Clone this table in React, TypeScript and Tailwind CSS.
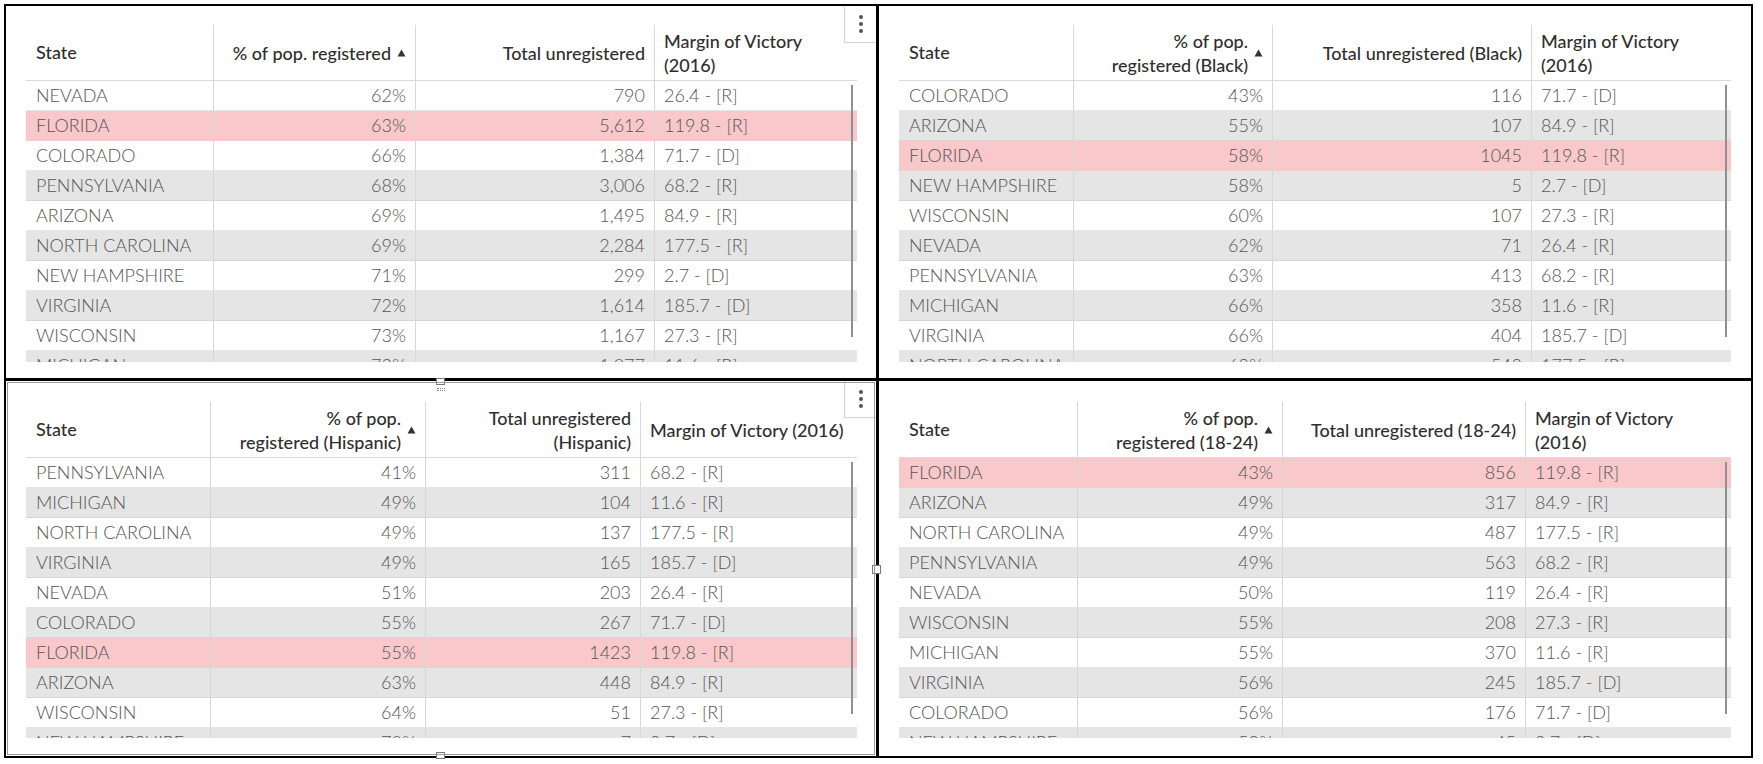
import React from "react";

type Row = [string, string, string, string];

type Panel = {
  cols: string;
  pad: string;
  bodyH: string;
  pctHead: string[];
  totalHead: string[];
  marginHead: string[];
  rows: Row[];
  menu?: boolean;
  selected?: boolean;
};

const panels: Panel[] = [
  {
    cols: "grid-cols-[188px_202px_239px_202px]",
    pad: "pt-[19px] pl-[20px]",
    bodyH: "h-[281px]",
    pctHead: ["% of pop. registered"],
    totalHead: ["Total unregistered"],
    marginHead: ["Margin of Victory", "(2016)"],
    menu: true,
    rows: [
      ["NEVADA", "62%", "790", "26.4 - [R]"],
      ["FLORIDA", "63%", "5,612", "119.8 - [R]"],
      ["COLORADO", "66%", "1,384", "71.7 - [D]"],
      ["PENNSYLVANIA", "68%", "3,006", "68.2 - [R]"],
      ["ARIZONA", "69%", "1,495", "84.9 - [R]"],
      ["NORTH CAROLINA", "69%", "2,284", "177.5 - [R]"],
      ["NEW HAMPSHIRE", "71%", "299", "2.7 - [D]"],
      ["VIRGINIA", "72%", "1,614", "185.7 - [D]"],
      ["WISCONSIN", "73%", "1,167", "27.3 - [R]"],
      ["MICHIGAN", "73%", "1,077", "11.6 - [R]"],
    ],
  },
  {
    cols: "grid-cols-[175px_199px_259px_199px]",
    pad: "pt-[19px] pl-[20px]",
    bodyH: "h-[281px]",
    pctHead: ["% of pop.", "registered (Black)"],
    totalHead: ["Total unregistered (Black)"],
    marginHead: ["Margin of Victory", "(2016)"],
    rows: [
      ["COLORADO", "43%", "116", "71.7 - [D]"],
      ["ARIZONA", "55%", "107", "84.9 - [R]"],
      ["FLORIDA", "58%", "1045", "119.8 - [R]"],
      ["NEW HAMPSHIRE", "58%", "5", "2.7 - [D]"],
      ["WISCONSIN", "60%", "107", "27.3 - [R]"],
      ["NEVADA", "62%", "71", "26.4 - [R]"],
      ["PENNSYLVANIA", "63%", "413", "68.2 - [R]"],
      ["MICHIGAN", "66%", "358", "11.6 - [R]"],
      ["VIRGINIA", "66%", "404", "185.7 - [D]"],
      ["NORTH CAROLINA", "69%", "548", "177.5 - [R]"],
    ],
  },
  {
    cols: "grid-cols-[185px_215px_215px_216px]",
    pad: "pt-[21px] pl-[20px]",
    bodyH: "h-[280px]",
    pctHead: ["% of pop.", "registered (Hispanic)"],
    totalHead: ["Total unregistered", "(Hispanic)"],
    marginHead: ["Margin of Victory (2016)"],
    menu: true,
    selected: true,
    rows: [
      ["PENNSYLVANIA", "41%", "311", "68.2 - [R]"],
      ["MICHIGAN", "49%", "104", "11.6 - [R]"],
      ["NORTH CAROLINA", "49%", "137", "177.5 - [R]"],
      ["VIRGINIA", "49%", "165", "185.7 - [D]"],
      ["NEVADA", "51%", "203", "26.4 - [R]"],
      ["COLORADO", "55%", "267", "71.7 - [D]"],
      ["FLORIDA", "55%", "1423", "119.8 - [R]"],
      ["ARIZONA", "63%", "448", "84.9 - [R]"],
      ["WISCONSIN", "64%", "51", "27.3 - [R]"],
      ["NEW HAMPSHIRE", "70%", "7", "2.7 - [D]"],
    ],
  },
  {
    cols: "grid-cols-[179px_205px_243px_205px]",
    pad: "pt-[21px] pl-[20px]",
    bodyH: "h-[280px]",
    pctHead: ["% of pop.", "registered (18-24)"],
    totalHead: ["Total unregistered (18-24)"],
    marginHead: ["Margin of Victory", "(2016)"],
    rows: [
      ["FLORIDA", "43%", "856", "119.8 - [R]"],
      ["ARIZONA", "49%", "317", "84.9 - [R]"],
      ["NORTH CAROLINA", "49%", "487", "177.5 - [R]"],
      ["PENNSYLVANIA", "49%", "563", "68.2 - [R]"],
      ["NEVADA", "50%", "119", "26.4 - [R]"],
      ["WISCONSIN", "55%", "208", "27.3 - [R]"],
      ["MICHIGAN", "55%", "370", "11.6 - [R]"],
      ["VIRGINIA", "56%", "245", "185.7 - [D]"],
      ["COLORADO", "56%", "176", "71.7 - [D]"],
      ["NEW HAMPSHIRE", "58%", "45", "2.7 - [D]"],
    ],
  },
];

const SortArrow = () => (
  <svg width="9" height="8" viewBox="0 0 9 8" className="ml-[6px] shrink-0">
    <path d="M4.5 0.5 L8.5 7.5 L0.5 7.5 Z" fill="#333" />
  </svg>
);

const HeadText = ({ lines, right }: { lines: string[]; right?: boolean }) => (
  <div className={right ? "text-right leading-[24px]" : "text-left leading-[24px]"}>
    {lines.map((l) => (
      <div key={l} className="whitespace-nowrap">
        {l}
      </div>
    ))}
  </div>
);

const MenuButton = () => (
  <div className="absolute top-0 right-0 w-[32px] h-[37px] bg-white border-l border-b border-[#d2d2d2] flex flex-col items-center justify-center gap-[3px]">
    <span className="w-[4px] h-[4px] rounded-full bg-[#555]" />
    <span className="w-[4px] h-[4px] rounded-full bg-[#555]" />
    <span className="w-[4px] h-[4px] rounded-full bg-[#555]" />
  </div>
);

const Handle = ({ className }: { className: string }) => (
  <div className={`absolute w-[9px] h-[7px] bg-white border border-[#7a7a7a] ${className}`} />
);

const TablePanel = ({ p }: { p: Panel }) => (
  <div className={`relative bg-white overflow-hidden ${p.pad}`}>
    {p.selected && (
      <div className="absolute inset-[1px] border border-[#9a9a9a] pointer-events-none z-10" />
    )}
    <div className="w-fit font-['Lato',sans-serif]">
      {/* header */}
      <div className={`grid ${p.cols} h-[56px] border-b border-[#d9d9d9] text-[18px] font-medium text-[#2f2f2f]`}>
        <div className="flex items-center pl-[10px] border-r border-[#d9d9d9]">State</div>
        <div className="flex items-center justify-end pr-[9px] border-r border-[#d9d9d9]">
          <HeadText lines={p.pctHead} right />
          <SortArrow />
        </div>
        <div className="flex items-center justify-end pr-[9px] border-r border-[#d9d9d9]">
          <HeadText lines={p.totalHead} right />
        </div>
        <div className="flex items-center pl-[9px]">
          <HeadText lines={p.marginHead} />
        </div>
      </div>
      {/* body */}
      <div className={`relative overflow-hidden ${p.bodyH}`}>
        {p.rows.map((r, i) => {
          const pink = r[0] === "FLORIDA";
          const bg = pink
            ? "bg-[#f8c8ca] border-[#f8c8ca]"
            : i % 2 === 1
            ? "bg-[#e5e5e5] border-[#d6d6d6]"
            : "bg-white border-[#e6e6e6]";
          return (
            <div
              key={r[0]}
              className={`grid ${p.cols} h-[30px] border-b ${bg} text-[18px] font-light text-[#555] leading-[29px]`}
            >
              <div className="pl-[10px] border-r border-[#d6d6d6] whitespace-nowrap">{r[0]}</div>
              <div className="pr-[9px] text-right border-r border-[#d6d6d6]">{r[1]}</div>
              <div className="pr-[9px] text-right border-r border-[#d6d6d6]">{r[2]}</div>
              <div className="pl-[9px]">{r[3]}</div>
            </div>
          );
        })}
        <div className="absolute right-[4px] top-[4px] w-[2px] h-[252px] bg-[#8f8f8f]" />
      </div>
    </div>
    {p.menu && <MenuButton />}
  </div>
);

export default function App() {
  return (
    <div className="w-[1763px] h-[764px] bg-white">
      <div className="ml-[4px] pt-[4px]">
        <div className="relative w-fit bg-black p-[2px] grid grid-cols-[870px_872px] grid-rows-[372px_375px] gap-[3px]">
          {panels.map((p, i) => (
            <TablePanel key={i} p={p} />
          ))}
          {/* resize handles of the selected panel */}
          <Handle className="left-[432px] top-[374px]" />
          <div className="absolute left-[433px] top-[384px] w-[8px] h-[3px] border-t border-b border-dotted border-[#888]" />
          <Handle className="left-[432px] bottom-[-1px]" />
          <Handle className="left-[868px] top-[561px] w-[7px] h-[9px]" />
        </div>
      </div>
    </div>
  );
}
